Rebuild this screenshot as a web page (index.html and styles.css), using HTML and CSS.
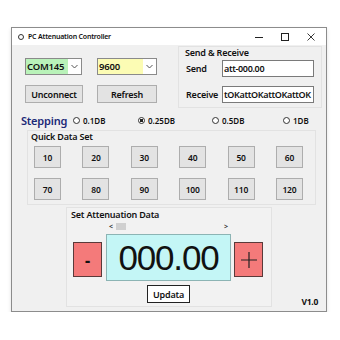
FILE: index.html
```html
<!DOCTYPE html>
<html lang="en">
<head>
    <meta charset="UTF-8">
    <meta name="viewport" content="width=device-width, initial-scale=1.0">
    <title>PC Attenuation Controller</title>
    <link rel="stylesheet" href="styles.css">
</head>
<body>
    <div class="window">
        <div class="titlebar">
            <span class="app-icon"></span>
            <span class="title">PC Attenuation Controller</span>
            <span class="ctl ctl-min">
                <svg width="8" height="8" viewBox="0 0 8 8"><path d="M0 4.5h8" stroke="#222" stroke-width="1"/></svg>
            </span>
            <span class="ctl ctl-max">
                <svg width="8" height="8" viewBox="0 0 8 8"><rect x="0.5" y="0.5" width="7" height="7" fill="none" stroke="#222" stroke-width="1"/></svg>
            </span>
            <span class="ctl ctl-close">
                <svg width="8" height="8" viewBox="0 0 8 8"><path d="M0.5 0.5l7 7M7.5 0.5l-7 7" stroke="#222" stroke-width="0.9"/></svg>
            </span>
        </div>

        <div class="content">
            <div class="top">
                <div class="port">
                    <div class="port-row">
                        <div class="combo combo-com">
                            <span class="combo-val">COM145</span>
                            <span class="combo-arrow"><svg width="7" height="5" viewBox="0 0 7 5"><path d="M0.5 1l3 3 3-3" fill="none" stroke="#555" stroke-width="1"/></svg></span>
                        </div>
                        <div class="combo combo-baud">
                            <span class="combo-val">9600</span>
                            <span class="combo-arrow"><svg width="7" height="5" viewBox="0 0 7 5"><path d="M0.5 1l3 3 3-3" fill="none" stroke="#555" stroke-width="1"/></svg></span>
                        </div>
                    </div>
                    <div class="port-row port-buttons">
                        <button class="btn btn-conn">Unconnect</button>
                        <button class="btn btn-refresh">Refresh</button>
                    </div>
                </div>

                <div class="group group-sr">
                    <div class="group-label">Send &amp; Receive</div>
                    <div class="sr-row">
                        <span class="sr-label">Send</span>
                        <div class="textbox">att-000.00</div>
                    </div>
                    <div class="sr-row">
                        <span class="sr-label">Receive</span>
                        <div class="textbox">tOKattOKattOKattOK</div>
                    </div>
                </div>
            </div>

            <div class="stepping">
                <span class="stepping-label">Stepping</span>
                <span class="radio radio-1"><span class="dot"></span>0.1DB</span>
                <span class="radio radio-2"><span class="dot checked"></span>0.25DB</span>
                <span class="radio radio-3"><span class="dot"></span>0.5DB</span>
                <span class="radio"><span class="dot"></span>1DB</span>
            </div>

            <div class="group group-quick">
                <div class="group-label">Quick Data Set</div>
                <div class="quick-grid">
                    <button class="btn qbtn">10</button>
                    <button class="btn qbtn">20</button>
                    <button class="btn qbtn">30</button>
                    <button class="btn qbtn">40</button>
                    <button class="btn qbtn">50</button>
                    <button class="btn qbtn">60</button>
                    <button class="btn qbtn">70</button>
                    <button class="btn qbtn">80</button>
                    <button class="btn qbtn">90</button>
                    <button class="btn qbtn">100</button>
                    <button class="btn qbtn">110</button>
                    <button class="btn qbtn">120</button>
                </div>
            </div>

            <div class="bottom">
                <div class="group group-set">
                    <div class="group-label">Set Attenuation Data</div>
                    <div class="set-body">
                        <button class="step-btn">-</button>
                        <div class="set-center">
                            <div class="scroll">
                                <span class="scroll-arrow">&lt;</span>
                                <span class="scroll-thumb"></span>
                                <span class="scroll-arrow scroll-right">&gt;</span>
                            </div>
                            <div class="display">000.00</div>
                            <button class="btn-update">Updata</button>
                        </div>
                        <button class="step-btn step-plus">
                            <svg width="16" height="16" viewBox="0 0 16 16"><path d="M8 0v16M0 8h16" stroke="#222" stroke-width="1.2"/></svg>
                        </button>
                    </div>
                </div>
                <span class="version">V1.0</span>
            </div>
        </div>
    </div>
</body>
</html>
```

FILE: styles.css
```css
body {
    margin: 0;
    background: #ffffff;
    font-family: "Noto Sans", "Open Sans", sans-serif;
    color: #111;
}
.window {
    box-sizing: border-box;
    margin: 27px 0 0 11px;
    width: 316px;
    height: 285px;
    border: 1px solid #8c8c8c;
    background: #f0f0f0;
    box-shadow: 0 2px 4px rgba(0, 0, 0, 0.12);
}
.titlebar {
    height: 17px;
    background: #ffffff;
    display: flex;
    align-items: center;
    font-size: 7px;
}
.app-icon {
    width: 4px;
    height: 4px;
    border: 1px solid #333;
    border-radius: 50%;
    margin-left: 6px;
}
.title {
    margin-left: 4px;
    font-weight: 600;
    letter-spacing: -0.2px;
}
.ctl {
    display: flex;
    justify-content: center;
    align-items: center;
    width: 26px;
    height: 17px;
}
.ctl-min {
    margin-left: auto;
}
.ctl-close {
    margin-right: 2px;
}
.content {
    display: flex;
    flex-direction: column;
}
.top {
    display: flex;
    margin-top: 1px;
    height: 62px;
}
.port {
    padding: 12px 0 0 13px;
}
.port-row {
    display: flex;
    gap: 15px;
}
.port-buttons {
    margin-top: 10px;
    gap: 14px;
}
.combo {
    box-sizing: border-box;
    display: flex;
    height: 17px;
    border: 1px solid #8a8a8a;
    background: #fff;
}
.combo-com {
    width: 57px;
}
.combo-baud {
    width: 60px;
}
.combo-val {
    flex: 1;
    font-size: 9.5px;
    font-weight: 600;
    letter-spacing: -0.2px;
    line-height: 15px;
    padding-left: 1px;
}
.combo-com .combo-val {
    background: #b9f2b9;
}
.combo-baud .combo-val {
    background: #fcfcb4;
}
.combo-arrow {
    width: 13px;
    display: flex;
    align-items: center;
    justify-content: center;
}
.btn {
    box-sizing: border-box;
    height: 18px;
    padding: 0;
    border: 1px solid #adadad;
    background: #e3e3e3;
    font-family: inherit;
    font-size: 9px;
    font-weight: 600;
    letter-spacing: -0.2px;
    color: #111;
}
.btn-conn {
    width: 58px;
}
.btn-refresh {
    width: 60px;
}
.group {
    box-sizing: border-box;
    border: 1px solid #e2e2e2;
}
.group-label {
    font-size: 9px;
    font-weight: 600;
    letter-spacing: -0.2px;
    line-height: 12px;
}
.group-sr {
    margin-left: 21px;
    width: 144px;
    height: 62px;
    padding: 0 0 0 6px;
}
.group-sr .group-label {
    line-height: 11px;
}
.sr-row {
    display: flex;
    align-items: center;
    margin-top: 2px;
}
.sr-row + .sr-row {
    margin-top: 9px;
}
.sr-label {
    width: 36px;
    font-size: 9px;
    font-weight: 600;
    letter-spacing: -0.2px;
    padding-left: 1px;
}
.textbox {
    box-sizing: border-box;
    width: 92px;
    height: 17px;
    border: 1px solid #7a7a7a;
    background: #fff;
    font-size: 9px;
    font-weight: 600;
    letter-spacing: -0.35px;
    line-height: 15px;
    padding-left: 1px;
    white-space: nowrap;
    overflow: hidden;
}
.stepping {
    display: flex;
    align-items: center;
    margin: 5px 0 0 9px;
    height: 14px;
}
.stepping-label {
    width: 52px;
    font-size: 11px;
    font-weight: 600;
    letter-spacing: -0.2px;
    color: #1d2a78;
}
.radio {
    display: flex;
    align-items: center;
    font-size: 8px;
    font-weight: 600;
}
.radio-1 {
    width: 65px;
}
.radio-2 {
    width: 74px;
}
.radio-3 {
    width: 71px;
}
.dot {
    box-sizing: border-box;
    width: 7px;
    height: 7px;
    border: 1px solid #333;
    border-radius: 50%;
    margin-right: 3px;
    background: #fff;
}
.dot.checked {
    background: radial-gradient(circle, #222 0 1.6px, #fff 1.9px);
}
.group-quick {
    margin: 3px 0 0 15px;
    width: 289px;
    height: 75px;
    padding: 0 0 0 3px;
}
.quick-grid {
    display: grid;
    grid-template-columns: repeat(6, 27px);
    grid-auto-rows: 22px;
    column-gap: 21.4px;
    row-gap: 10px;
    margin: 3px 0 0 3px;
}
.qbtn {
    height: 22px;
    font-size: 8.5px;
}
.bottom {
    display: flex;
    margin-top: 2px;
}
.group-set {
    margin-left: 54px;
    width: 206px;
    height: 100px;
    padding: 1px 0 0 4px;
    background: #f2f2f2;
}
.set-body {
    display: flex;
    align-items: flex-start;
    margin-top: 2px;
    padding-left: 2px;
}
.step-btn {
    box-sizing: border-box;
    width: 29px;
    height: 35px;
    margin-top: 19px;
    padding: 0;
    border: 1px solid #5a3a3a;
    background: #f47a7a;
    font-family: inherit;
    font-size: 16px;
    font-weight: 800;
    line-height: 30px;
    color: #111;
}
.step-plus {
    display: flex;
    align-items: center;
    justify-content: center;
    margin-left: 3px;
}
.set-center {
    display: flex;
    flex-direction: column;
    align-items: center;
    width: 125px;
    margin-left: 4px;
}
.scroll {
    display: flex;
    align-items: center;
    width: 121px;
    height: 7px;
    font-size: 7px;
    font-weight: 700;
    line-height: 7px;
    color: #333;
}
.scroll-arrow {
    width: 6px;
    text-align: center;
}
.scroll-thumb {
    width: 10px;
    height: 7px;
    margin-left: 2px;
    background: #d0d0d0;
}
.scroll-right {
    margin-left: auto;
}
.display {
    box-sizing: border-box;
    width: 125px;
    height: 47px;
    margin-top: 4px;
    border: 1px solid #8cb4b4;
    background: #c4f6f6;
    font-family: "Liberation Sans", Arial, sans-serif;
    font-size: 35px;
    letter-spacing: -1.2px;
    line-height: 45px;
    text-align: center;
    color: #111;
}
.btn-update {
    box-sizing: border-box;
    width: 43px;
    height: 18px;
    margin-top: 4px;
    padding: 0;
    border: 1px solid #222;
    background: #fff;
    font-family: inherit;
    font-size: 9px;
    font-weight: 600;
    letter-spacing: -0.2px;
    color: #111;
}
.version {
    align-self: flex-end;
    margin-left: auto;
    margin-right: 8px;
    margin-bottom: 0;
    font-size: 8.5px;
    font-weight: 700;
    letter-spacing: -0.3px;
}
```
